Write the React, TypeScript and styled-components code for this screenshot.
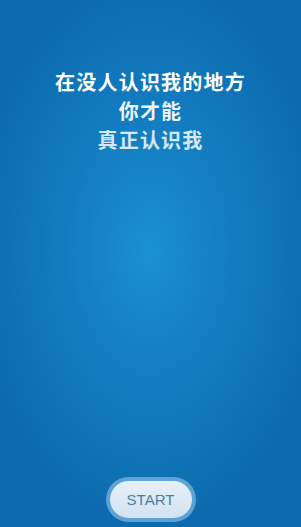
import React from 'react';
import styled, { createGlobalStyle } from 'styled-components';

const GlobalStyle = createGlobalStyle`
  html, body, #root {
    margin: 0;
    padding: 0;
    height: 100%;
  }
  body {
    font-family: "Noto Sans CJK SC", "Noto Sans", sans-serif;
    overflow: hidden;
  }
`;

const Screen = styled.div`
  width: 301px;
  height: 527px;
  display: flex;
  flex-direction: column;
  align-items: center;
  justify-content: space-between;
  box-sizing: border-box;
  padding: 67px 0 5px;
  background: radial-gradient(ellipse 190px 300px at 150px 250px, #1a90d2 0%, #137cc0 45%, #0b68ab 100%);
`;

const Poem = styled.div`
  display: flex;
  flex-direction: column;
  align-items: center;
`;

const Line = styled.div<{ tone: string }>`
  font-size: 20px;
  font-weight: 700;
  line-height: 29px;
  letter-spacing: 1.2px;
  color: ${p => p.tone};
`;

const StartRing = styled.div`
  padding: 4px;
  border-radius: 24px;
  background: rgba(120, 180, 225, 0.75);
`;

const StartButton = styled.button`
  width: 82px;
  height: 37px;
  border: none;
  border-radius: 19px;
  background: linear-gradient(#e6f0f8, #d2e3f1);
  color: #4d7da6;
  font-family: "Liberation Sans", Arial, sans-serif;
  font-size: 15px;
  font-weight: 400;
  cursor: pointer;
`;

const App: React.FC = () => (
  <>
    <GlobalStyle />
    <Screen>
      <Poem>
        <Line tone="#ffffff">在没人认识我的地方</Line>
        <Line tone="#eef5fb">你才能</Line>
        <Line tone="#d6e8f5">真正认识我</Line>
      </Poem>
      <StartRing>
        <StartButton>START</StartButton>
      </StartRing>
    </Screen>
  </>
);

export default App;
